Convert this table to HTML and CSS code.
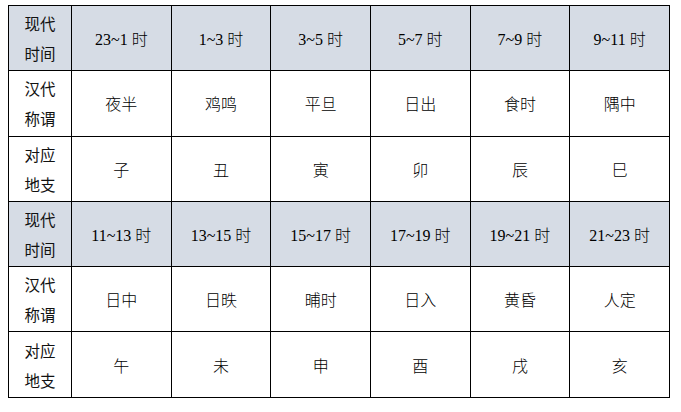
FILE: index.html
```html
<!DOCTYPE html>
<html lang="zh">
<head>
<meta charset="utf-8">
<link rel="stylesheet" href="styles.css">
</head>
<body>
<table class="grid">
  <colgroup>
    <col class="c-label">
    <col><col><col><col><col><col>
  </colgroup>
  <tr class="head">
    <th class="label">现代<br>时间</th>
    <td>23~1 时</td><td>1~3 时</td><td>3~5 时</td><td>5~7 时</td><td>7~9 时</td><td>9~11 时</td>
  </tr>
  <tr>
    <th class="label">汉代<br>称谓</th>
    <td>夜半</td><td>鸡鸣</td><td>平旦</td><td>日出</td><td>食时</td><td>隅中</td>
  </tr>
  <tr>
    <th class="label">对应<br>地支</th>
    <td>子</td><td>丑</td><td>寅</td><td>卯</td><td>辰</td><td>巳</td>
  </tr>
  <tr class="head">
    <th class="label">现代<br>时间</th>
    <td>11~13 时</td><td>13~15 时</td><td>15~17 时</td><td>17~19 时</td><td>19~21 时</td><td>21~23 时</td>
  </tr>
  <tr>
    <th class="label">汉代<br>称谓</th>
    <td>日中</td><td>日昳</td><td>晡时</td><td>日入</td><td>黄昏</td><td>人定</td>
  </tr>
  <tr>
    <th class="label">对应<br>地支</th>
    <td>午</td><td>未</td><td>申</td><td>酉</td><td>戌</td><td>亥</td>
  </tr>
</table>
</body>
</html>
```

FILE: styles.css
```css
html, body {
  background: #fff;
}
body {
  margin: 5px 0 0 8px;
  font-family: "Liberation Serif", "Noto Sans CJK SC", serif;
  color: #000;
}
.grid {
  border-collapse: collapse;
  table-layout: fixed;
  width: 662px;
}
.c-label {
  width: 63px;
}
.grid th,
.grid td {
  border: 1.5px solid #000;
  height: 64.3px;
  padding: 0;
  text-align: center;
  vertical-align: middle;
  font-size: 16px;
  font-weight: normal;
}
.grid td {
  font-family: "Liberation Serif", "Noto Sans CJK SC", serif;
  font-weight: 300;
}
.grid .label {
  font-family: "Noto Sans CJK SC", sans-serif;
  font-size: 15.5px;
  line-height: 30px;
  color: #111;
}
.head th,
.head td {
  background: #d6dce5;
}
```
